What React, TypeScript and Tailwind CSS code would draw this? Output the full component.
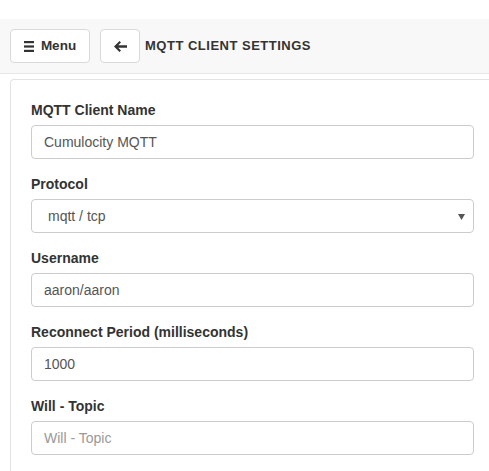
const fields = [
	{ label: "MQTT Client Name", value: "Cumulocity MQTT" },
	{ label: "Protocol", value: "mqtt / tcp", select: true },
	{ label: "Username", value: "aaron/aaron" },
	{ label: "Reconnect Period (milliseconds)", value: "1000" },
	{ label: "Will - Topic", value: "", placeholder: "Will - Topic" },
];

function MenuIcon() {
	return (
		<svg width="10" height="11" viewBox="0 0 10 11" className="fill-[#333]">
			<rect x="0" y="0" width="10" height="2.2" />
			<rect x="0" y="4.4" width="10" height="2.2" />
			<rect x="0" y="8.8" width="10" height="2.2" />
		</svg>
	);
}

function ArrowLeft() {
	return (
		<svg width="13" height="11" viewBox="0 0 13 11" className="fill-[#333]">
			<path d="M0 5.5 L5.5 0 L7 1.5 L4.2 4.3 H13 V6.7 H4.2 L7 9.5 L5.5 11 Z" />
		</svg>
	);
}

export default function App() {
	return (
		<div className="w-[489px] h-[471px] overflow-hidden bg-white font-['Liberation_Sans',Arial,sans-serif] text-[#333]">
			<div className="h-[19px]" />
			<div className="h-[55px] bg-[#f8f8f8] border-b border-[#e7e7e7] flex items-start pt-[10px] pl-[10px]">
				<button
					type="button"
					className="w-[80px] h-[34px] flex items-center justify-center gap-[7px] bg-white border border-[#d9d9d9] rounded-[4px] text-[13.5px] font-bold">
					<MenuIcon />
					<span>Menu</span>
				</button>
				<button
					type="button"
					className="ml-[10px] w-[40px] h-[34px] flex items-center justify-center bg-white border border-[#d9d9d9] rounded-[4px]">
					<ArrowLeft />
				</button>
				<div className="ml-[5px] h-[34px] flex items-center text-[13px] font-bold tracking-[0.5px]">
					MQTT CLIENT SETTINGS
				</div>
			</div>
			<div className="mt-[5px] ml-[10px] w-[484px] h-[420px] border-l border-t border-[#e3e3e3] rounded-tl-[4px] pt-[20px] pl-[20px] pr-[20px]">
				{fields.map((f) => (
					<div key={f.label} className="mb-[15px]">
						<div className="h-[20px] leading-[20px] text-[14px] font-bold mb-[5px]">{f.label}</div>
						{f.select ? (
							<div className="relative h-[34px] border border-[#ccc] rounded-[4px] flex items-center pl-[16px] text-[14px] text-[#555]">
								{f.value}
								<svg width="7" height="6" viewBox="0 0 7 6" className="absolute right-[8px] top-[14px] fill-[#555]">
									<path d="M0 0 H7 L3.5 6 Z" />
								</svg>
							</div>
						) : (
							<input
								readOnly
								value={f.value}
								placeholder={f.placeholder}
								className="w-full h-[34px] border border-[#ccc] rounded-[4px] px-[12px] text-[14px] text-[#555] placeholder:text-[#999] outline-none"
							/>
						)}
					</div>
				))}
			</div>
		</div>
	);
}
